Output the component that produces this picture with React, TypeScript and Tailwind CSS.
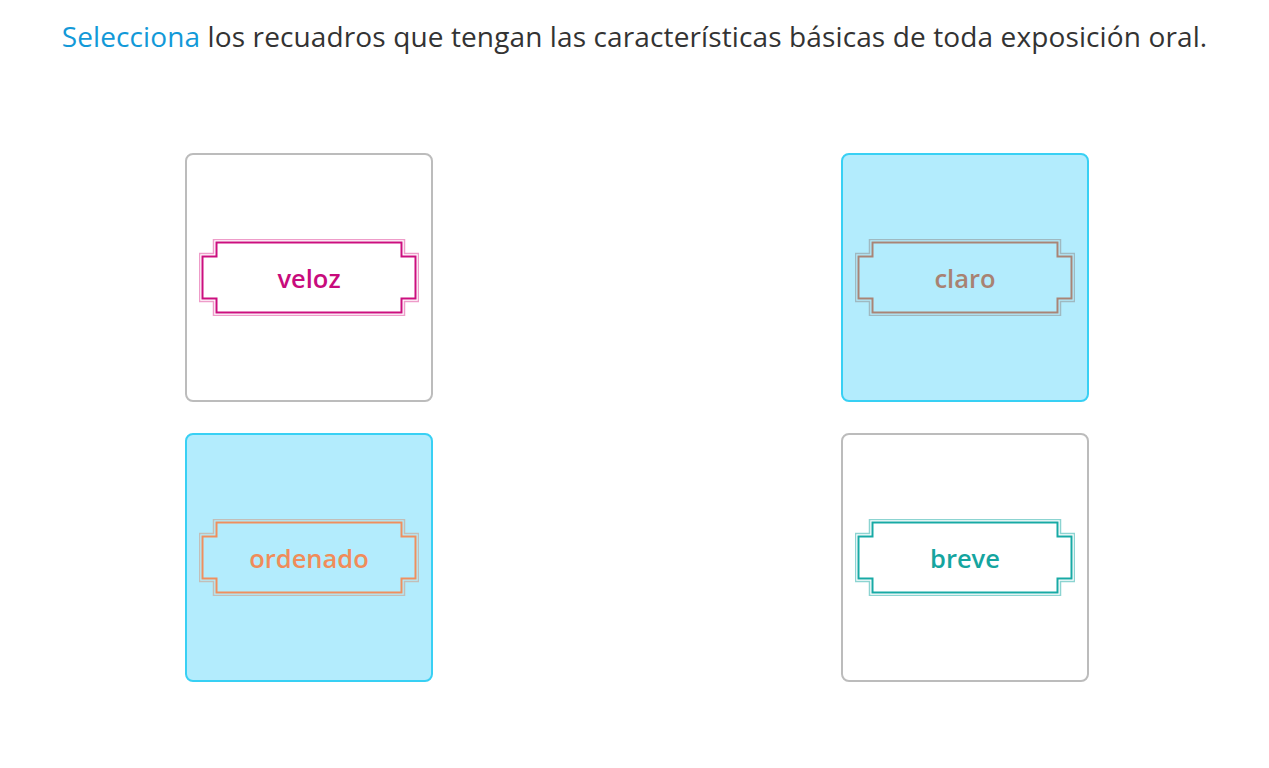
import React from "react";

type Item = { label: string; dark: string; light: string; text: string; selected: boolean };

const items: Item[] = [
  { label: "veloz", dark: "#cc0f7f", light: "#ee9cc9", text: "#c80b7c", selected: false },
  { label: "claro", dark: "#a98476", light: "#9fb9c1", text: "#a88272", selected: true },
  { label: "ordenado", dark: "#ef8f5f", light: "#c3beb8", text: "#f08c5a", selected: true },
  { label: "breve", dark: "#18aaa5", light: "#8cd4d1", text: "#15a59f", selected: false },
];

function Frame({ item }: { item: Item }) {
  return (
    <div className="relative w-[220px] h-[77px] flex items-center justify-center">
      <svg className="absolute inset-0" width="220" height="77" viewBox="0 0 220 77">
        <path
          d="M14.5 0.5 H205.5 V14.5 H219.5 V62.5 H205.5 V76.5 H14.5 V62.5 H0.5 V14.5 H14.5 Z"
          fill="none"
          stroke={item.light}
          strokeWidth="1.5"
        />
        <path
          d="M17.5 3.5 H202.5 V17.5 H216.5 V59.5 H202.5 V73.5 H17.5 V59.5 H3.5 V17.5 H17.5 Z"
          fill="none"
          stroke={item.dark}
          strokeWidth="2"
        />
      </svg>
      <span
        className="relative text-[25.5px] font-semibold leading-none pt-[3px]"
        style={{ color: item.text, fontFamily: '"Open Sans", sans-serif' }}
      >
        {item.label}
      </span>
    </div>
  );
}

function Card({ item }: { item: Item }) {
  return (
    <div
      className={
        item.selected
          ? "w-[248px] h-[249px] rounded-[8px] border-2 border-[#38d0f4] bg-[#b3ecfd] flex items-center justify-center"
          : "w-[248px] h-[249px] rounded-[8px] border-2 border-[#bcbcbc] bg-white flex items-center justify-center"
      }
    >
      <Frame item={item} />
    </div>
  );
}

export default function App() {
  return (
    <div className="w-[1269px] h-[768px] bg-white" style={{ fontFamily: '"Open Sans", sans-serif' }}>
      <p className="pt-[17px] text-center text-[28px] leading-[38px] text-[#333333] tracking-[0.12px]">
        <span className="text-[#1299d8]">Selecciona</span> los recuadros que tengan las características básicas de toda exposición oral.
      </p>
      <div className="pt-[98px] pl-[185px] grid grid-cols-[248px_248px] gap-x-[408px] gap-y-[31px]">
        {items.map((it) => (
          <Card key={it.label} item={it} />
        ))}
      </div>
    </div>
  );
}
